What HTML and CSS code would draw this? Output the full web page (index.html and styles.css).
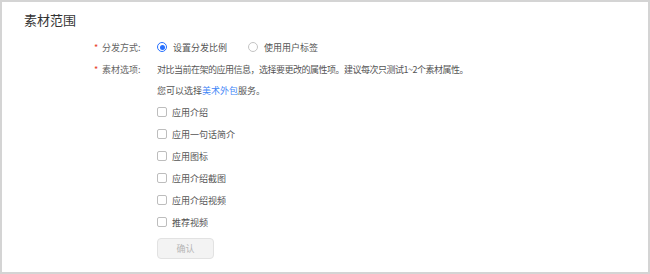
FILE: index.html
```html
<!DOCTYPE html>
<html lang="zh">
<head>
<meta charset="utf-8">
<link rel="stylesheet" href="styles.css">
</head>
<body>
<div class="panel">
  <div class="title">素材范围</div>
  <div class="form">
    <div class="label"><span class="req">*</span>分发方式:</div>
    <div class="field radios">
      <label class="radio"><span class="circle on"></span>设置分发比例</label>
      <label class="radio"><span class="circle"></span>使用用户标签</label>
    </div>
    <div class="label"><span class="req">*</span>素材选项:</div>
    <div class="field desc">对比当前在架的应用信息，选择要更改的属性项。建议每次只测试1~2个素材属性。</div>
    <div></div>
    <div class="field short">您可以选择<span class="link">美术外包</span>服务。</div>
    <div></div>
    <div class="checks">
      <label class="check"><span class="box"></span>应用介绍</label>
      <label class="check"><span class="box"></span>应用一句话简介</label>
      <label class="check"><span class="box"></span>应用图标</label>
      <label class="check"><span class="box"></span>应用介绍截图</label>
      <label class="check"><span class="box"></span>应用介绍视频</label>
      <label class="check"><span class="box"></span>推荐视频</label>
      <div class="btn">确认</div>
    </div>
  </div>
</div>
</body>
</html>
```
FILE: styles.css
```css
html, body {
  margin: 0;
  padding: 0;
  background: #fff;
}
body {
  font-family: "Noto Sans CJK SC", "Noto Sans", sans-serif;
  color: #555;
}
.panel {
  width: 650px;
  height: 274px;
  box-sizing: border-box;
  border: 2px solid #d4d4d4;
  padding: 8px 0 0 22px;
}
.title {
  font-size: 13px;
  line-height: 20px;
  color: #333;
  margin-bottom: 6px;
}
.form {
  margin-left: 68px;
  display: grid;
  grid-template-columns: 65px auto;
  font-size: 9px;
}
.label {
  display: flex;
  align-items: center;
  height: 22px;
  color: #666;
}
.req {
  color: #e84026;
  width: 10px;
  padding-left: 2px;
  box-sizing: border-box;
}
.field {
  display: flex;
  align-items: center;
  height: 22px;
  color: #555;
}
.field.desc {
  letter-spacing: -0.5px;
}
.field.short {
  height: 21px;
}
.radios {
  gap: 21px;
}
.radio {
  display: flex;
  align-items: center;
  gap: 6px;
  color: #555;
}
.circle {
  width: 10px;
  height: 10px;
  box-sizing: border-box;
  border-radius: 50%;
  border: 1px solid #c4c4c4;
  display: inline-flex;
  align-items: center;
  justify-content: center;
}
.circle.on {
  border-color: #256fff;
}
.circle.on::after {
  content: "";
  width: 5px;
  height: 5px;
  border-radius: 50%;
  background: #256fff;
}
.link {
  color: #3f86f7;
}
.checks {
  display: flex;
  flex-direction: column;
}
.check {
  display: flex;
  align-items: center;
  height: 22px;
  gap: 5px;
  color: #555;
}
.box {
  width: 10px;
  height: 10px;
  box-sizing: border-box;
  border: 1px solid #bdbdbd;
  border-radius: 2px;
}
.btn {
  margin-top: 5px;
  width: 57px;
  height: 21px;
  box-sizing: border-box;
  border: 1px solid #e2e2e2;
  border-radius: 4px;
  background: #f3f3f3;
  color: #b5b5b5;
  display: flex;
  align-items: center;
  justify-content: center;
}
```
